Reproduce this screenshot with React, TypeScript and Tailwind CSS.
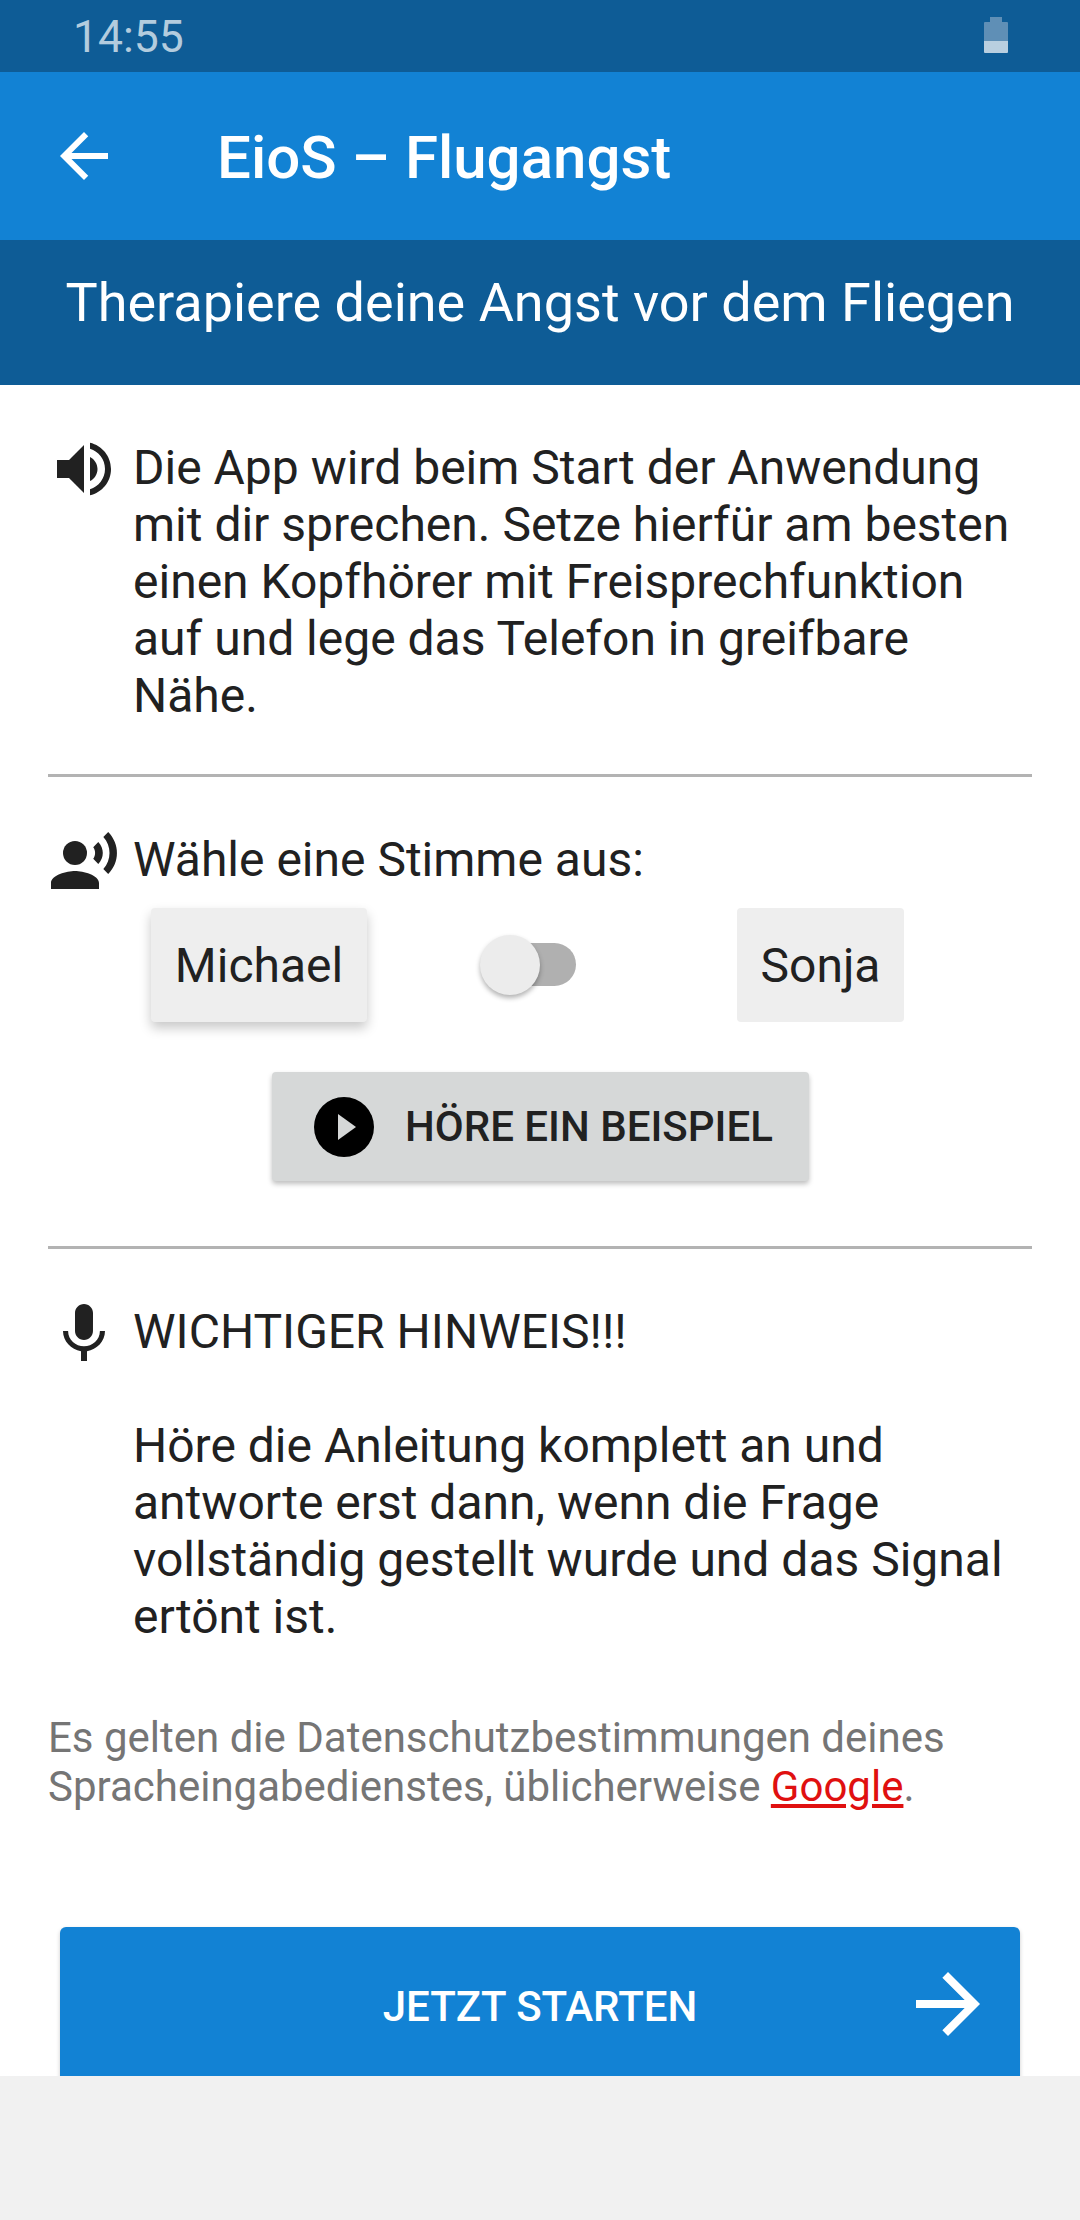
function Icon({ d, className, children }: { d?: string; className?: string; children?: React.ReactNode }) {
  return (
    <svg viewBox="0 0 24 24" fill="currentColor" className={className}>
      {d && <path d={d} />}
      {children}
    </svg>
  )
}

const arrowBack = 'M20 11H7.83l5.59-5.59L12 4l-8 8 8 8 1.41-1.41L7.83 13H20v-2z'
const arrowForward = 'M12 4l-1.41 1.41L16.17 11H4v2h12.17l-5.58 5.59L12 20l8-8z'
const volumeUp =
  'M3 9v6h4l5 5V4L7 9H3zm13.5 3c0-1.77-1.02-3.29-2.5-4.03v8.05c1.48-.73 2.5-2.25 2.5-4.02zM14 3.23v2.06c2.89.86 5 3.54 5 6.71s-2.11 5.85-5 6.71v2.06c4.01-.91 7-4.49 7-8.77s-2.99-7.86-7-8.77z'
const mic =
  'M12 14c1.66 0 2.99-1.34 2.99-3L15 5c0-1.66-1.34-3-3-3S9 3.34 9 5v6c0 1.66 1.34 3 3 3zm5.3-3c0 3-2.54 5.1-5.3 5.1S6.7 14 6.7 11H5c0 3.41 2.72 6.23 6 6.72V21h2v-3.28c3.28-.48 6-3.3 6-6.72h-1.7z'
const voice =
  'M9 15c-2.67 0-8 1.34-8 4v2h16v-2c0-2.66-5.33-4-8-4zm7.76-9.64l-1.68 1.69c.84 1.18.84 2.71 0 3.89l1.68 1.69c2.02-2.02 2.02-5.07 0-7.27zM20.07 2l-1.63 1.63c2.77 3.02 2.77 7.56 0 10.74L20.07 16c3.9-3.89 3.91-9.95 0-14z'

export default function App() {
  return (
    <div className="flex h-[2220px] w-[1080px] flex-col overflow-hidden bg-white font-['Roboto',sans-serif] text-[#212121]">
      <div className="flex h-[72px] shrink-0 items-center justify-between bg-[#0e5c96] pl-[73px] pr-[72px]">
        <span className="mt-[3px] text-[44.5px] leading-[69px] text-white/70">14:55</span>
        <svg viewBox="0 0 24 36" className="mb-[2px] h-[36px] w-[24px]">
          <path d="M6 0h12v5h5a1 1 0 0 1 1 1v18H0V6a1 1 0 0 1 1-1h5z" fill="#5f8fb6" />
          <path d="M0 24h24v11a1 1 0 0 1-1 1H1a1 1 0 0 1-1-1z" fill="#b9cfe0" />
        </svg>
      </div>

      <header className="flex h-[168px] shrink-0 items-center bg-[#1282d4] pl-[48px] text-white">
        <Icon d={arrowBack} className="h-[72px] w-[72px]" />
        <h1 className="mt-[3px] ml-[97px] text-[60px] font-medium">EioS – Flugangst</h1>
      </header>

      <div className="flex h-[145px] shrink-0 items-start justify-center bg-[#0e5c96] pt-[27px] text-[54px] leading-[72px] text-white">
        Therapiere deine Angst vor dem Fliegen
      </div>

      <main className="min-h-0 flex-1 overflow-hidden px-[48px] text-[48px] leading-[57px]">
        <div className="mt-[54px] flex">
          <Icon d={volumeUp} className="-mt-[6px] h-[72px] w-[72px] shrink-0" />
          <p className="ml-[13px] w-[885px]">
            Die App wird beim Start der Anwendung mit dir sprechen. Setze hierfür am besten einen Kopfhörer mit
            Freisprechfunktion auf und lege das Telefon in greifbare Nähe.
          </p>
        </div>

        <div className="mt-[50px] h-[3px] bg-[#b3b3b3]" />

        <div className="mt-[54px] flex">
          <Icon className="-mt-[5px] -mb-[10px] h-[72px] w-[72px] shrink-0">
            <circle cx="9" cy="9" r="4" />
            <path d={voice} />
          </Icon>
          <p className="ml-[13px]">Wähle eine Stimme aus:</p>
        </div>

        <div className="mt-[20px] flex items-center pl-[103px]">
          <div className="flex h-[114px] w-[216px] items-center justify-center rounded-[4px] bg-[#eeeeee] shadow-[0_6px_12px_rgba(0,0,0,0.22)]">
            Michael
          </div>
          <div className="relative ml-[113px] h-[60px] w-[96px]">
            <div className="absolute top-[8px] right-0 h-[43px] w-[86px] rounded-full bg-[#b0b0b0]" />
            <div className="absolute top-0 left-0 h-[60px] w-[60px] rounded-full bg-[#ececec] shadow-[0_3px_5px_rgba(0,0,0,0.3)]" />
          </div>
          <div className="ml-[161px] flex h-[114px] w-[167px] items-center justify-center rounded-[4px] bg-[#eeeeee]">
            Sonja
          </div>
        </div>

        <div className="mt-[50px] ml-[224px] flex h-[109px] w-[537px] items-center rounded-[4px] bg-[#d6d8d8] pl-[42px] shadow-[0_3px_5px_rgba(0,0,0,0.25)]">
          <svg viewBox="0 0 60 60" className="h-[60px] w-[60px] shrink-0">
            <circle cx="30" cy="30" r="30" fill="#000" />
            <path d="M24 17l18 13-18 13z" fill="#d6d8d8" />
          </svg>
          <span className="ml-[31px] text-[42px] font-medium whitespace-nowrap">HÖRE EIN BEISPIEL</span>
        </div>

        <div className="mt-[65px] h-[3px] bg-[#b3b3b3]" />

        <div className="mt-[54px] flex">
          <Icon d={mic} className="-mt-[5px] h-[72px] w-[72px] shrink-0" />
          <div className="ml-[13px] w-[885px]">
            <p>WICHTIGER HINWEIS!!!</p>
            <p className="mt-[57px]">
              Höre die Anleitung komplett an und antworte erst dann, wenn die Frage vollständig gestellt wurde und
              das Signal ertönt ist.
            </p>
          </div>
        </div>

        <p className="mt-[68px] text-[42px] leading-[49px] text-[#757575]">
          Es gelten die Datenschutzbestimmungen deines Spracheingabedienstes, üblicherweise{' '}
          <a className="text-[#e01010] underline">Google</a>.
        </p>

        <div className="mt-[116px] mx-[12px] relative flex h-[200px] items-start justify-center rounded-[6px] bg-[#1282d4] pt-[51px] text-[42px] leading-[58px] font-medium text-white shadow-[0_2px_4px_rgba(0,0,0,0.2)]">
          JETZT STARTEN
          <Icon d={arrowForward} className="absolute top-[29px] right-[24px] h-[96px] w-[96px]" />
        </div>
      </main>

      <div className="h-[144px] shrink-0 bg-[#f1f1f1]" />
    </div>
  )
}
